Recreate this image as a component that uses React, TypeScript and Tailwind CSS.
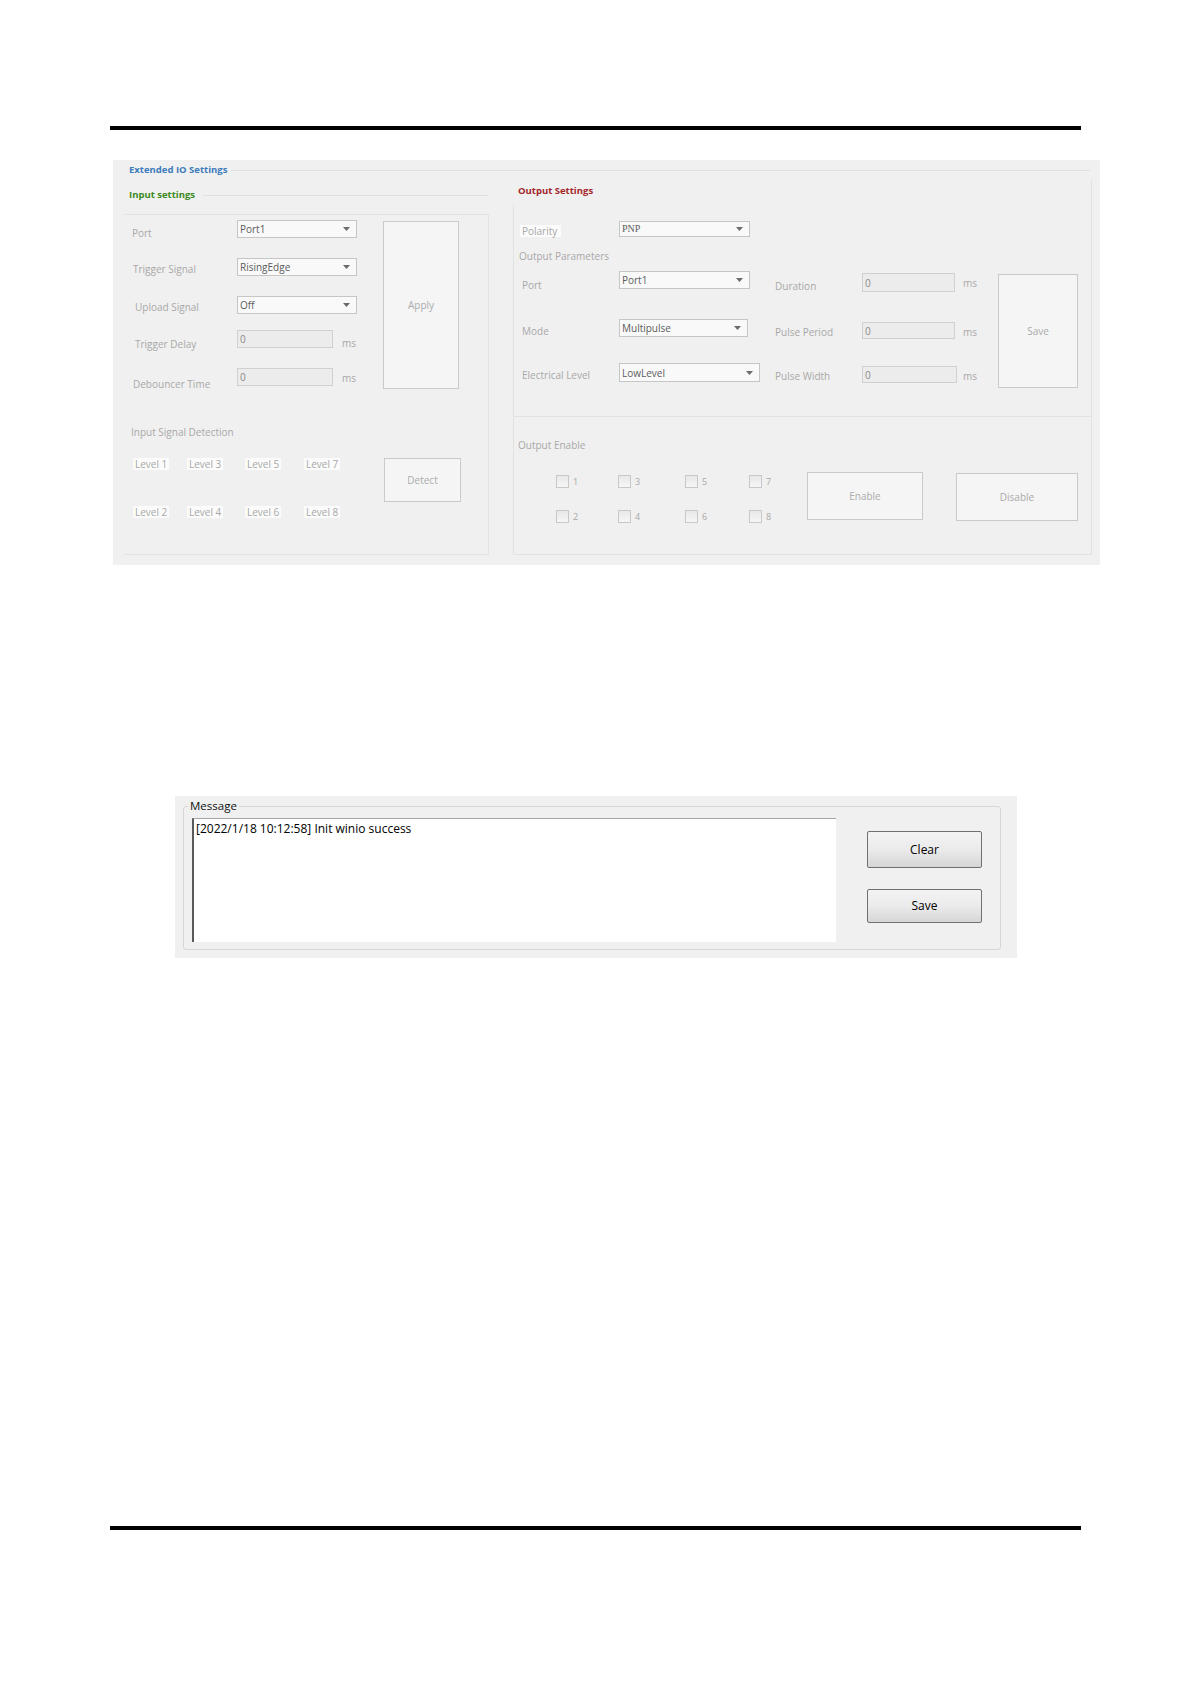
import React from 'react'

// grey "disabled" Win-style widgets
const font = { fontFamily: '"Open Sans", "Liberation Sans", sans-serif' }

function Arrow() {
  return (
    <svg width="7" height="4" viewBox="0 0 7 4" className="shrink-0">
      <polygon points="0,0 7,0 3.5,4" fill="#6b6b6b" />
    </svg>
  )
}

function Select({ value, className, serif }: { value: string; className: string; serif?: boolean }) {
  return (
    <div
      className={`flex items-center justify-between border border-[#c6c6c6] bg-[#f9f9f9] pl-[2px] pr-[6px] text-[10px] leading-[12px] text-[#5c5c5c] ${className}`}
    >
      <span style={serif ? { fontFamily: '"Liberation Serif", serif' } : undefined}>{value}</span>
      <Arrow />
    </div>
  )
}

function Field({ className }: { className: string }) {
  return (
    <div className={`flex items-center border border-[#d0d0d0] bg-[#ececec] pl-[2px] text-[10px] leading-[12px] text-[#8a8a8a] ${className}`}>
      0
    </div>
  )
}

function GreyButton({ label, className }: { label: string; className: string }) {
  return (
    <div className={`flex shrink-0 items-center justify-center border border-[#cacaca] bg-[#f5f5f5] text-[10px] text-[#ababab] ${className}`}>
      {label}
    </div>
  )
}

const levels = [
  ['Level 1', 'Level 3', 'Level 5', 'Level 7'],
  ['Level 2', 'Level 4', 'Level 6', 'Level 8'],
]

const boxes = [
  ['1', '3', '5', '7'],
  ['2', '4', '6', '8'],
]

function InputSettings() {
  return (
    <div className="flex w-[376px] shrink-0 flex-col">
      <div className="flex h-[30px] items-center pl-[16px] pr-[1px]">
        <span className="text-[9.5px] font-bold text-[#3b8a22]">Input settings</span>
        <div className="ml-[8px] h-px flex-1 bg-[#e0e0e0]" />
      </div>
      <div className="ml-[11px] mt-[4px] h-[341px] w-[365px] border-t border-r border-b border-[#e3e3e3] text-[10px] leading-[14px] text-[#a8a8a8]">
        <div className="flex">
          <div className="flex w-[259px] flex-col">
            <div className="mt-[5px] flex h-[18px]">
              <div className="w-[113px] pl-[8px] pt-[6px]">Port</div>
              <Select value="Port1" className="h-[18px] w-[120px]" />
            </div>
            <div className="mt-[20px] flex h-[18px]">
              <div className="w-[113px] pl-[9px] pt-[4px]">Trigger Signal</div>
              <Select value="RisingEdge" className="h-[18px] w-[120px]" />
            </div>
            <div className="mt-[20px] flex h-[18px]">
              <div className="w-[113px] pl-[11px] pt-[4px]">Upload Signal</div>
              <Select value="Off" className="h-[18px] w-[120px]" />
            </div>
            <div className="mt-[16px] flex h-[18px]">
              <div className="w-[113px] pl-[11px] pt-[7px]">Trigger Delay</div>
              <Field className="h-[18px] w-[96px]" />
              <div className="ml-[9px] pt-[6px]">ms</div>
            </div>
            <div className="mt-[20px] flex h-[18px]">
              <div className="w-[113px] pl-[9px] pt-[9px]">Debouncer Time</div>
              <Field className="h-[18px] w-[96px]" />
              <div className="ml-[9px] pt-[3px]">ms</div>
            </div>
          </div>
          <GreyButton label="Apply" className="mt-[6px] h-[168px] w-[76px]" />
        </div>

        <div className="mt-[36px] pl-[7px]">Input Signal Detection</div>
        <div className="flex">
          <div className="flex w-[259px] flex-col gap-[36px] pt-[19px]">
            {levels.map((row, r) => (
              <div key={r} className="grid grid-cols-[54px_58px_59px_auto] pl-[9px]">
                {row.map((l) => (
                  <div key={l} className="flex">
                    <span className="h-[12px] bg-[#fbfbfb] px-[2px] leading-[12px]">{l}</span>
                  </div>
                ))}
              </div>
            ))}
          </div>
          <GreyButton label="Detect" className="ml-[1px] mt-[19px] h-[44px] w-[77px]" />
        </div>
      </div>
    </div>
  )
}

function OutputSettings() {
  return (
    <div className="flex w-[603px] flex-col border-r border-[#e2e2e2]">
      <div className="flex h-[22px] items-center pl-[29px]">
        <span className="text-[9.5px] font-bold text-[#a3262a]">Output Settings</span>
      </div>
      <div className="ml-[24px] mt-[3px] h-[350px] w-[578px] border-l border-b border-[#e2e2e2] text-[10px] leading-[14px] text-[#a8a8a8]">
        <div className="mt-[16px] flex">
          <div className="w-[105px] pl-[6px] pt-[4px]">
            <span className="block h-[12px] w-[41px] bg-[#fbfbfb] pl-[2px] leading-[13px]">Polarity</span>
          </div>
          <Select value="PNP" serif className="h-[16px] w-[131px]" />
        </div>
        <div className="mt-[12px] pl-[5px]">Output Parameters</div>

        <div className="mt-[8px] flex">
          <div className="flex w-[484px] flex-col">
            <div className="flex h-[20px]">
              <div className="flex w-[261px]">
                <div className="w-[105px] pl-[8px] pt-[7px]">Port</div>
                <Select value="Port1" className="h-[18px] w-[131px]" />
              </div>
              <div className="w-[87px] pt-[8px]">Duration</div>
              <Field className="mt-[2px] h-[19px] w-[93px]" />
              <div className="ml-[8px] pt-[5px]">ms</div>
            </div>
            <div className="mt-[28px] flex h-[20px]">
              <div className="flex w-[261px]">
                <div className="w-[105px] pl-[8px] pt-[5px]">Mode</div>
                <Select value="Multipulse" className="h-[18px] w-[129px]" />
              </div>
              <div className="w-[87px] pt-[6px]">Pulse Period</div>
              <Field className="mt-[3px] h-[17px] w-[93px]" />
              <div className="ml-[8px] pt-[6px]">ms</div>
            </div>
            <div className="mt-[24px] flex h-[20px]">
              <div className="flex w-[261px]">
                <div className="w-[105px] pl-[8px] pt-[5px]">Electrical Level</div>
                <Select value="LowLevel" className="h-[19px] w-[141px]" />
              </div>
              <div className="w-[87px] pt-[6px]">Pulse Width</div>
              <Field className="mt-[3px] h-[17px] w-[95px]" />
              <div className="ml-[6px] pt-[6px]">ms</div>
            </div>
          </div>
          <GreyButton label="Save" className="mt-[3px] h-[114px] w-[80px]" />
        </div>

        <div className="mt-[28px] h-px w-[577px] bg-[#e2e2e2]" />
        <div className="mt-[21px] pl-[4px]">Output Enable</div>
        <div className="flex">
          <div className="flex w-[293px] flex-col gap-[22px] pl-[42px] pt-[23px]">
            {boxes.map((row, r) => (
              <div key={r} className="grid grid-cols-[62px_67px_64px_auto]">
                {row.map((b) => (
                  <div key={b} className="flex items-center">
                    <span className="h-[13px] w-[13px] border border-[#c8c8c8] bg-gradient-to-b from-[#e8e8e8] to-[#f6f6f6]" />
                    <span className="ml-[4px] text-[9px] leading-[13px]">{b}</span>
                  </div>
                ))}
              </div>
            ))}
          </div>
          <GreyButton label="Enable" className="mt-[20px] h-[48px] w-[116px]" />
          <GreyButton label="Disable" className="ml-[33px] mt-[21px] h-[48px] w-[122px]" />
        </div>
      </div>
    </div>
  )
}

function WinButton({ label, className }: { label: string; className: string }) {
  return (
    <div
      className={`flex items-center justify-center rounded-[2px] border border-[#707070] bg-gradient-to-b from-[#f3f3f3] via-[#ebebeb] to-[#d6d6d6] text-[12px] text-black ${className}`}
    >
      {label}
    </div>
  )
}

export default function App() {
  return (
    <div className="relative min-h-[1684px] w-[1191px] overflow-hidden bg-white" style={font}>
      <div className="ml-[110px] mt-[126px] h-[4px] w-[971px] bg-black" />

      {/* Extended IO settings panel */}
      <div className="ml-[113px] mt-[30px] flex h-[405px] w-[987px] flex-col bg-[#f0f0f0]">
        <div className="flex h-[20px] items-center pl-[16px] pr-[10px]">
          <span className="text-[9.5px] font-bold text-[#3d7bbb]">Extended IO Settings</span>
          <div className="ml-[4px] h-px flex-1 bg-[#e0e0e0]" />
        </div>
        <div className="flex">
          <InputSettings />
          <OutputSettings />
        </div>
      </div>

      {/* Message panel */}
      <div className="ml-[175px] mt-[231px] h-[162px] w-[842px] bg-[#f0f0f0] pt-[3px]">
        <fieldset className="ml-[8px] h-[151px] w-[818px] rounded-[3px] border border-[#d6d6d6]">
          <legend className="ml-[4px] px-[2px] text-[11.5px] leading-[14px] text-[#111]">Message</legend>
          <div className="flex">
            <div className="ml-[8px] mt-[5px] h-[124px] w-[644px] border-t border-l-2 border-t-[#a5a5a5] border-l-[#5a5a5a] bg-white px-[2px] pt-[2px] text-[12px] leading-[16px] text-black">
              [2022/1/18 10:12:58] Init winio success
            </div>
            <div className="ml-[31px] flex flex-col">
              <WinButton label="Clear" className="mt-[18px] h-[37px] w-[115px]" />
              <WinButton label="Save" className="mt-[21px] h-[34px] w-[115px]" />
            </div>
          </div>
        </fieldset>
      </div>

      <div className="ml-[110px] mt-[568px] h-[4px] w-[971px] bg-black" />
    </div>
  )
}
